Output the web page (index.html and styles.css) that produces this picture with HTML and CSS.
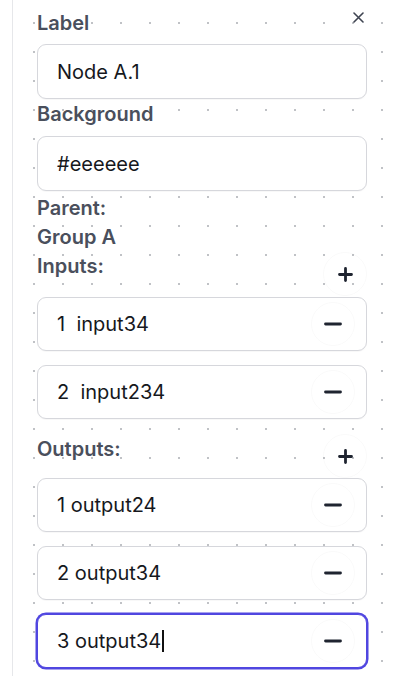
FILE: index.html
```html
<!DOCTYPE html>
<html>
<head>
<meta charset="utf-8">
<link rel="stylesheet" href="styles.css">
</head>
<body>
<div class="panel">
  <button class="close" aria-label="close">
    <svg width="11" height="11" viewBox="0 0 11 11"><path d="M1 1L10 10M10 1L1 10" stroke="#3f4451" stroke-width="1.6" stroke-linecap="round"/></svg>
  </button>
  <div class="label">Label</div>
  <div class="field"><span class="val">Node A.1</span></div>
  <div class="label tight">Background</div>
  <div class="field"><span class="val">#eeeeee</span></div>
  <div class="info">Parent:</div>
  <div class="info">Group A</div>

  <div class="section-head">
    <span class="info">Inputs:</span>
    <button class="circle-btn"><svg width="15" height="15" viewBox="0 0 15 15"><path d="M7.5 1.5V13.5M1.5 7.5H13.5" stroke="#1f2430" stroke-width="2.8" stroke-linecap="round"/></svg></button>
  </div>
  <div class="list">
    <div class="field row"><span class="val">1  input34</span><button class="circle-btn"><svg width="18" height="4" viewBox="0 0 18 4"><path d="M1.5 2H16.5" stroke="#1f2430" stroke-width="2.8" stroke-linecap="round"/></svg></button></div>
    <div class="field row"><span class="val">2  input234</span><button class="circle-btn"><svg width="18" height="4" viewBox="0 0 18 4"><path d="M1.5 2H16.5" stroke="#1f2430" stroke-width="2.8" stroke-linecap="round"/></svg></button></div>
  </div>

  <div class="section-head out">
    <span class="info">Outputs:</span>
    <button class="circle-btn"><svg width="15" height="15" viewBox="0 0 15 15"><path d="M7.5 1.5V13.5M1.5 7.5H13.5" stroke="#1f2430" stroke-width="2.8" stroke-linecap="round"/></svg></button>
  </div>
  <div class="list">
    <div class="field row"><span class="val">1 output24</span><button class="circle-btn"><svg width="18" height="4" viewBox="0 0 18 4"><path d="M1.5 2H16.5" stroke="#1f2430" stroke-width="2.8" stroke-linecap="round"/></svg></button></div>
    <div class="field row"><span class="val">2 output34</span><button class="circle-btn"><svg width="18" height="4" viewBox="0 0 18 4"><path d="M1.5 2H16.5" stroke="#1f2430" stroke-width="2.8" stroke-linecap="round"/></svg></button></div>
    <div class="field row focus"><span class="val">3 output34<span class="caret"></span></span><button class="circle-btn"><svg width="18" height="4" viewBox="0 0 18 4"><path d="M1.5 2H16.5" stroke="#1f2430" stroke-width="2.8" stroke-linecap="round"/></svg></button></div>
  </div>
</div>
</body>
</html>
```

FILE: styles.css
```css
html, body {
  margin: 0;
  padding: 0;
  background: #ffffff;
}
body {
  width: 400px;
  height: 676px;
  overflow: hidden;
  font-family: Inter, "Noto Sans", "Liberation Sans", sans-serif;
}
.panel {
  position: relative;
  margin-left: 12px;
  height: 676px;
  box-sizing: border-box;
  border-left: 1px solid #e6e7ea;
  padding: 11px 33px 0 24px;
  display: flex;
  flex-direction: column;
  background-image: radial-gradient(circle at 1px 1px, #c0c2c6 0.9px, transparent 1.4px);
  background-size: 29px 29px;
  background-position: 20px 22px;
}
.close {
  position: absolute;
  top: 11px;
  right: 36px;
  width: 12px;
  height: 12px;
  padding: 0;
  border: 0;
  background: transparent;
  display: flex;
  align-items: center;
  justify-content: center;
}
.label {
  font-size: 20px;
  font-weight: 600;
  line-height: 24px;
  color: #4a4f5c;
  margin-bottom: 9px;
}
.label.tight {
  margin-top: 3px;
  margin-bottom: 10px;
}
.info {
  font-size: 20px;
  font-weight: 600;
  line-height: 29px;
  color: #4a4f5c;
}
.field {
  height: 55px;
  box-sizing: border-box;
  border: 1px solid #d6d7dc;
  border-radius: 9px;
  background: #ffffff;
  display: flex;
  align-items: center;
  padding-left: 19px;
  box-shadow: 0 1px 1px rgba(0,0,0,0.03);
}
.field + .info {
  margin-top: 3px;
}
.val {
  font-size: 20px;
  color: #16181d;
  white-space: pre;
  display: flex;
  align-items: center;
}
.caret {
  display: inline-block;
  width: 1.5px;
  height: 22px;
  background: #111;
  margin-left: 1px;
}
.section-head {
  display: flex;
  justify-content: space-between;
  align-items: flex-start;
  height: 44px;
  margin-bottom: 1px;
}
.section-head.out {
  margin-top: 15px;
  height: 44px;
  margin-bottom: 0;
}
.section-head .info {
  line-height: 29px;
}
.section-head.out .info {
  margin-top: 1px;
}
.circle-btn {
  width: 44px;
  height: 44px;
  border-radius: 50%;
  border: 1px solid rgba(0,0,0,0.022);
  background: transparent;
  padding: 0;
  display: flex;
  align-items: center;
  justify-content: center;
  flex-shrink: 0;
}
.list {
  display: flex;
  flex-direction: column;
  gap: 14px;
}
.row {
  height: 54px;
  justify-content: space-between;
  padding-right: 11px;
}
.focus {
  border-color: #5046e0;
  box-shadow: 0 0 0 1.5px #5046e0;
}
```
